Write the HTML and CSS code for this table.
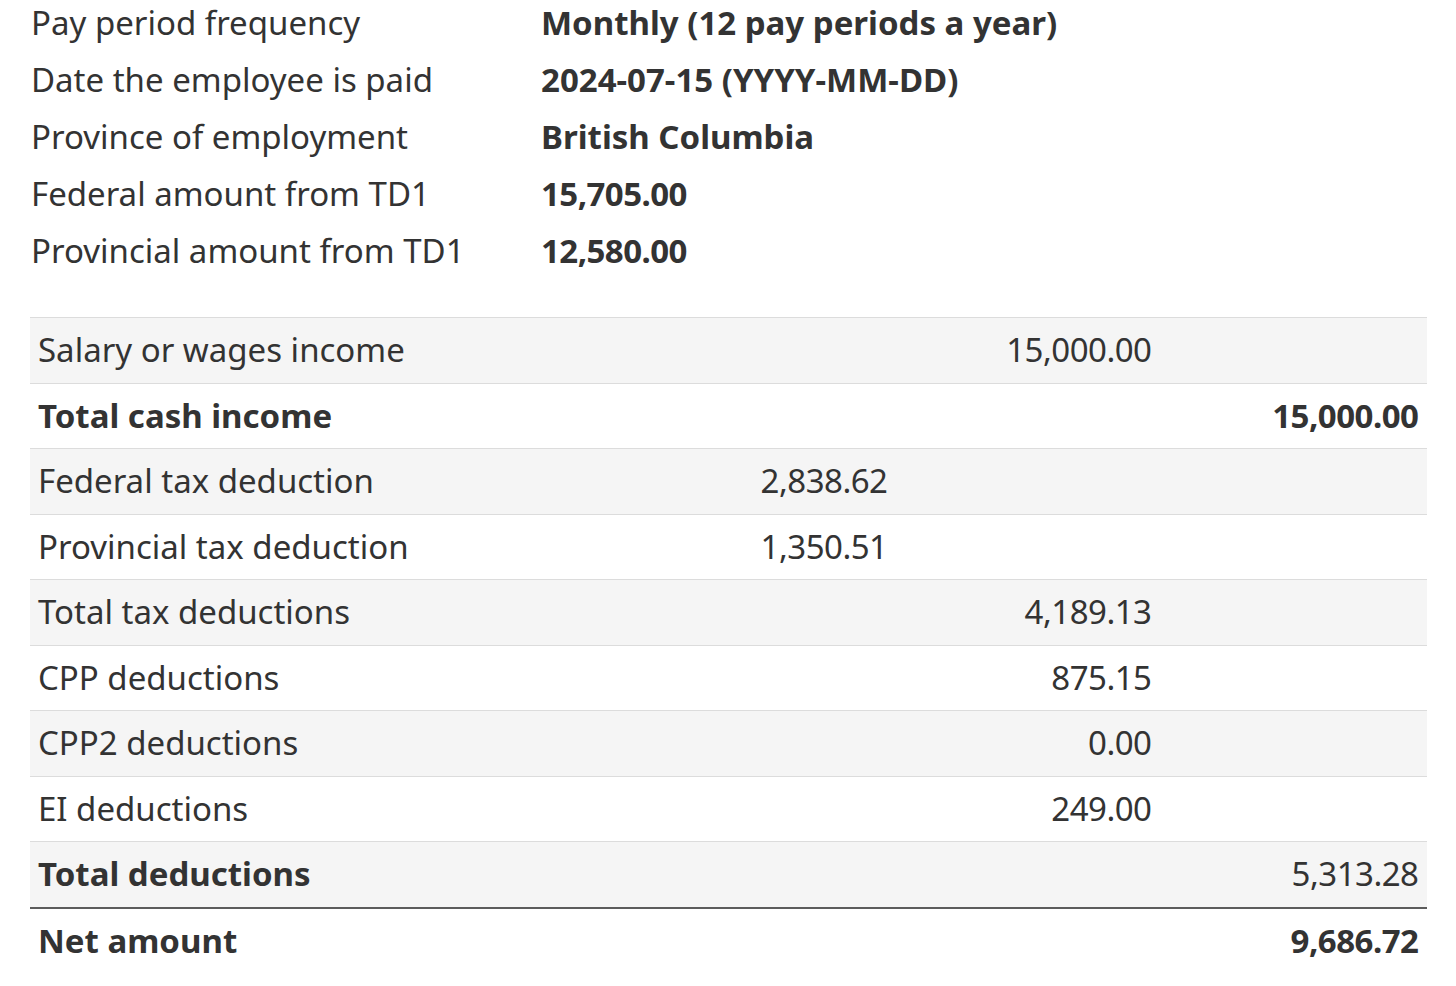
FILE: index.html
```html
<!DOCTYPE html>
<html lang="en">
<head>
<meta charset="utf-8">
<title>Payroll deductions results</title>
<link rel="stylesheet" href="styles.css">
</head>
<body>
<main class="page">
  <dl class="summary">
    <dt>Pay period frequency</dt><dd>Monthly (12 pay periods a year)</dd>
    <dt>Date the employee is paid</dt><dd>2024-07-15 (YYYY-MM-DD)</dd>
    <dt>Province of employment</dt><dd>British Columbia</dd>
    <dt>Federal amount from TD1</dt><dd class="amt">15,705.00</dd>
    <dt>Provincial amount from TD1</dt><dd class="amt">12,580.00</dd>
  </dl>
  <table class="results">
    <colgroup>
      <col class="c1"><col class="c2"><col class="c3"><col class="c4">
    </colgroup>
    <tbody>
      <tr><td>Salary or wages income</td><td></td><td class="num">15,000.00</td><td></td></tr>
      <tr class="strong"><td>Total cash income</td><td></td><td></td><td class="num">15,000.00</td></tr>
      <tr><td>Federal tax deduction</td><td class="num">2,838.62</td><td></td><td></td></tr>
      <tr><td>Provincial tax deduction</td><td class="num">1,350.51</td><td></td><td></td></tr>
      <tr><td>Total tax deductions</td><td></td><td class="num">4,189.13</td><td></td></tr>
      <tr><td>CPP deductions</td><td></td><td class="num">875.15</td><td></td></tr>
      <tr><td>CPP2 deductions</td><td></td><td class="num">0.00</td><td></td></tr>
      <tr><td>EI deductions</td><td></td><td class="num">249.00</td><td></td></tr>
      <tr><td class="b">Total deductions</td><td></td><td></td><td class="num">5,313.28</td></tr>
      <tr class="strong net"><td>Net amount</td><td></td><td></td><td class="num">9,686.72</td></tr>
    </tbody>
  </table>
</main>
</body>
</html>
```
FILE: styles.css
```css
html, body {
  margin: 0;
  padding: 0;
  background: #fff;
}
body {
  font-family: "Noto Sans", "Open Sans", sans-serif;
  font-size: 33px;
  color: #333;
}
.page {
  padding: 0 29px 0 30px;
}
.summary {
  display: grid;
  grid-template-columns: 511px 1fr;
  row-gap: 12px;
  margin: 0 0 44px 0;
  line-height: 45px;
}
.summary dt {
  margin: 0;
  padding-left: 1px;
}
.summary dd {
  margin: 0;
  font-weight: 700;
}
.summary .amt {
  letter-spacing: -0.55px;
}
.results {
  width: 100%;
  border-collapse: collapse;
  line-height: 44.5px;
}
.results .c1 { width: auto; }
.results .c2 { width: 264px; }
.results .c3 { width: 264px; }
.results .c4 { width: 267px; }
.results td {
  padding: 10px 8px;
  border-top: 1px solid #dcdcdc;
  white-space: nowrap;
}
.results tbody tr:nth-child(odd) {
  background: #f5f5f5;
}
.results .num {
  text-align: right;
  letter-spacing: -0.5px;
  padding-right: 8.5px;
}
.results .strong td,
.results td.b {
  font-weight: 700;
}
.results .net td {
  border-top: 2px solid #5c5c5c;
}
```
